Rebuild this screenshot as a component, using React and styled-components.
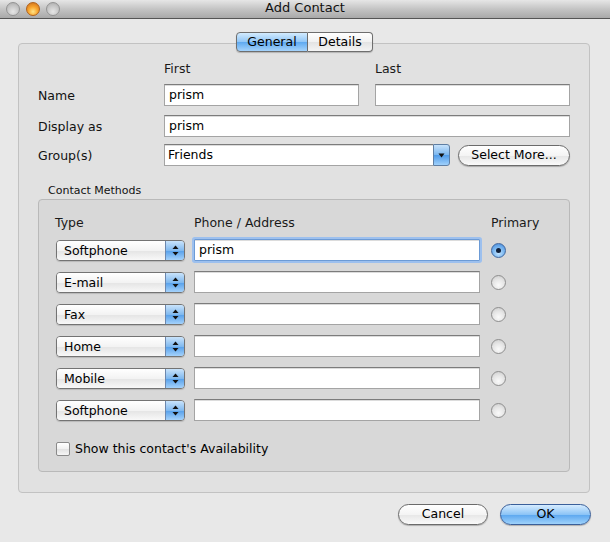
import styled, { createGlobalStyle } from "styled-components";

const GlobalStyle = createGlobalStyle`
  html, body {
    margin: 0;
    padding: 0;
    background: #e8e8e8;
  }
  body {
    font-family: "DejaVu Sans", "Lucida Grande", Verdana, sans-serif;
    font-size: 12.5px;
    color: #000;
  }
`;

const Window = styled.div`
  width: 610px;
  height: 542px;
  background: #e8e8e8;
  overflow: hidden;
`;

const TitleBar = styled.div`
  display: flex;
  align-items: center;
  position: relative;
  background: linear-gradient(#e6e6e6, #c4c4c4 50%, #a9a9a9);
  border-bottom: 1px solid #555;
  padding-bottom: 1px;
  box-sizing: border-box;
  height: 19px;
`;

const Lights = styled.div`
  display: flex;
  gap: 6px;
  padding-left: 6px;
`;

const Light = styled.span`
  width: 14px;
  height: 14px;
  border-radius: 50%;
  border: 1px solid ${(p) => (p.$active ? "#b0611a" : "#939393")};
  box-sizing: border-box;
  background: ${(p) =>
    p.$active
      ? "radial-gradient(circle at 50% 72%, #ffe58a 0%, #f9a52d 45%, #c9691b 100%)"
      : "radial-gradient(circle at 50% 72%, #e6e6e6 0%, #c9c9c9 50%, #a9a9a9 100%)"};
`;

const Title = styled.div`
  position: absolute;
  left: 0;
  right: 0;
  top: 0;
  line-height: 15px;
  text-align: center;
  font-size: 13px;
  color: #111;
  pointer-events: none;
`;

const Body = styled.div`
  padding: 13px 20px 0 18px;
`;

const TabRow = styled.div`
  display: flex;
  justify-content: center;
  margin-bottom: -9px;
  position: relative;
  z-index: 1;
  padding-left: 1px;
`;

const Tab = styled.div`
  height: 20px;
  width: ${(p) => p.$w}px;
  box-sizing: border-box;
  line-height: 18px;
  text-align: center;
  border: 1px solid #6e6e6e;
  background: ${(p) =>
    p.$selected
      ? "linear-gradient(#d3ebfe, #8fc5f6 50%, #5ea9f0 51%, #a5d3fb)"
      : "linear-gradient(#ffffff, #f1f1f1 50%, #e3e3e3 51%, #f4f4f4)"};
  border-radius: ${(p) => (p.$first ? "4px 0 0 4px" : "0 4px 4px 0")};
  ${(p) => (p.$first ? "" : "border-left: none;")}
  box-shadow: 0 1px 1px rgba(0, 0, 0, 0.2);
`;

const TabBox = styled.div`
  border: 1px solid #c2c2c2;
  border-radius: 4px;
  background: #e1e1e1;
  padding: 17px 19px 20px 19px;
  height: 450px;
  box-sizing: border-box;
`;

const NameGrid = styled.div`
  display: grid;
  grid-template-columns: 110px 1fr 1fr;
  column-gap: 16px;
  align-items: center;
`;

const ColHead = styled.div`
  line-height: 16px;
  color: #1a1a1a;
  margin-bottom: 7px;
`;

const Label = styled.div`
  color: #111;
`;

const TextField = styled.div`
  height: 22px;
  box-sizing: border-box;
  background: #fff;
  border: 1px solid #a4a4a4;
  border-top-color: #7c7c7c;
  box-shadow: inset 0 1px 0 #dcdcdc;
  padding: 0 4px;
  line-height: 20px;
  ${(p) =>
    p.$focused &&
    `
    border: 1px solid #6c9bd6;
    box-shadow: 0 0 0 2px #9dc0ee, inset 0 1px 0 #dcdcdc;
    border-radius: 1px;
  `}
`;

const SpanField = styled.div`
  grid-column: 2 / 4;
  margin-top: ${(p) => p.$top}px;
`;

const RowLabel = styled(Label)`
  margin-top: ${(p) => p.$top}px;
`;

const GroupRow = styled.div`
  grid-column: 2 / 4;
  display: flex;
  gap: 8px;
  margin-top: 7px;
  align-items: center;
`;

const Combo = styled.div`
  flex: 1;
  display: flex;
  height: 22px;
`;

const ComboText = styled(TextField)`
  flex: 1;
  border-right: none;
  padding-left: 3px;
`;

const ComboArrow = styled.div`
  width: 17px;
  height: 22px;
  box-sizing: border-box;
  border: 1px solid #5f7ea3;
  border-radius: 0 3px 3px 0;
  background: linear-gradient(#c7e2fb, #7ab6ef 50%, #4f9be9 51%, #9fd0fb);
  display: flex;
  align-items: center;
  justify-content: center;
`;

const PushButton = styled.div`
  width: ${(p) => p.$w}px;
  height: 21px;
  box-sizing: border-box;
  border-radius: 11px;
  border: 1px solid ${(p) => (p.$default ? "#3a5f9a" : "#6b6b6b")};
  background: ${(p) =>
    p.$default
      ? "linear-gradient(#d6ecff, #8cc4f6 50%, #5aa6ef 51%, #9fd2fb)"
      : "linear-gradient(#ffffff, #f4f4f4 50%, #e6e6e6 51%, #fafafa)"};
  box-shadow: 0 1px 1px rgba(0, 0, 0, 0.25);
  display: flex;
  align-items: center;
  justify-content: center;
  line-height: 1;
`;

const SectionTitle = styled.div`
  font-size: 11px;
  margin: 18px 0 1px 10px;
  line-height: 14px;
  color: #111;
`;

const MethodsBox = styled.div`
  border: 1px solid #b9b9b9;
  border-radius: 4px;
  background: #d8d8d8;
  padding: 15px 16px 15px 16px;
`;

const MethodsGrid = styled.div`
  display: grid;
  grid-template-columns: 130px 286px 1fr;
  column-gap: 9px;
  row-gap: 10px;
  align-items: center;
`;

const MethodsHead = styled.div`
  line-height: 16px;
  color: #1a1a1a;
  margin-bottom: -2px;
  padding-left: ${(p) => p.$indent || 0}px;
`;

const Popup = styled.div`
  height: 21px;
  box-sizing: border-box;
  display: flex;
  border: 1px solid #737373;
  border-radius: 4px;
  overflow: hidden;
  box-shadow: 0 1px 1px rgba(0, 0, 0, 0.15);
  margin-left: 1px;
`;

const PopupText = styled.div`
  flex: 1;
  padding-left: 7px;
  line-height: 19px;
  background: linear-gradient(#ffffff, #f3f3f3 50%, #e4e4e4 51%, #f8f8f8);
`;

const PopupArrows = styled.div`
  width: 18px;
  border-left: 1px solid #6c87ad;
  background: linear-gradient(#c9e3fb, #80b9ef 50%, #559fea 51%, #a4d2fb);
  display: flex;
  align-items: center;
  justify-content: center;
`;

const Radio = styled.div`
  width: 15px;
  height: 15px;
  box-sizing: border-box;
  border-radius: 50%;
  margin-left: 2px;
  border: 1px solid ${(p) => (p.$on ? "#40679e" : "#8e8e8e")};
  background: ${(p) =>
    p.$on
      ? "radial-gradient(circle at 50% 70%, #c4e4ff 0%, #7ab7f0 50%, #3f83d8 100%)"
      : "radial-gradient(circle at 50% 70%, #fafafa 0%, #e6e6e6 50%, #c9c9c9 100%)"};
  display: flex;
  align-items: center;
  justify-content: center;
  &::after {
    content: "";
    display: ${(p) => (p.$on ? "block" : "none")};
    width: 5px;
    height: 5px;
    border-radius: 50%;
    background: #10203a;
  }
`;

const CheckRow = styled.label`
  display: flex;
  align-items: center;
  gap: 5px;
  margin-top: 20px;
  padding-left: 1px;
`;

const CheckBox = styled.span`
  width: 14px;
  height: 14px;
  box-sizing: border-box;
  border: 1px solid #8a8a8a;
  border-radius: 2px;
  background: linear-gradient(#ffffff, #f0f0f0 50%, #e2e2e2 51%, #f6f6f6);
`;

const Footer = styled.div`
  display: flex;
  justify-content: flex-end;
  gap: 12px;
  padding-top: 11px;
  margin-right: -1px;
`;

const UpDown = () => (
  <svg width="7" height="11" viewBox="0 0 7 11">
    <path d="M3.5 0.5 L6.5 4 L0.5 4 Z" fill="#111" />
    <path d="M0.5 7 L6.5 7 L3.5 10.5 Z" fill="#111" />
  </svg>
);

const Down = () => (
  <svg width="7" height="5" viewBox="0 0 7 5">
    <path d="M0.5 0.5 L6.5 0.5 L3.5 4.5 Z" fill="#111" />
  </svg>
);

const methods = [
  { type: "Softphone", value: "prism", primary: true },
  { type: "E-mail", value: "" },
  { type: "Fax", value: "" },
  { type: "Home", value: "" },
  { type: "Mobile", value: "" },
  { type: "Softphone", value: "" },
];

export default function App() {
  return (
    <Window>
      <GlobalStyle />
      <TitleBar>
        <Lights>
          <Light />
          <Light $active />
          <Light />
        </Lights>
        <Title>Add Contact</Title>
      </TitleBar>
      <Body>
        <TabRow>
          <Tab $first $selected $w={72}>
            General
          </Tab>
          <Tab $w={65}>Details</Tab>
        </TabRow>
        <TabBox>
          <NameGrid>
            <div />
            <ColHead>First</ColHead>
            <ColHead>Last</ColHead>
            <Label>Name</Label>
            <TextField>prism</TextField>
            <TextField />
            <RowLabel $top={9}>Display as</RowLabel>
            <SpanField $top={9}>
              <TextField>prism</TextField>
            </SpanField>
            <RowLabel $top={7}>Group(s)</RowLabel>
            <GroupRow>
              <Combo>
                <ComboText>Friends</ComboText>
                <ComboArrow>
                  <Down />
                </ComboArrow>
              </Combo>
              <PushButton $w={112}>Select More...</PushButton>
            </GroupRow>
          </NameGrid>

          <SectionTitle>Contact Methods</SectionTitle>
          <MethodsBox>
            <MethodsGrid>
              <MethodsHead>Type</MethodsHead>
              <MethodsHead>Phone / Address</MethodsHead>
              <MethodsHead $indent={2}>Primary</MethodsHead>
              {methods.map((m, i) => [
                <Popup key={`p${i}`}>
                  <PopupText>{m.type}</PopupText>
                  <PopupArrows>
                    <UpDown />
                  </PopupArrows>
                </Popup>,
                <TextField key={`t${i}`} $focused={i === 0}>
                  {m.value}
                </TextField>,
                <div key={`r${i}`}>
                  <Radio $on={m.primary} />
                </div>,
              ])}
            </MethodsGrid>
            <CheckRow>
              <CheckBox />
              Show this contact's Availability
            </CheckRow>
          </MethodsBox>
        </TabBox>
        <Footer>
          <PushButton $w={90}>Cancel</PushButton>
          <PushButton $w={91} $default>
            OK
          </PushButton>
        </Footer>
      </Body>
    </Window>
  );
}
